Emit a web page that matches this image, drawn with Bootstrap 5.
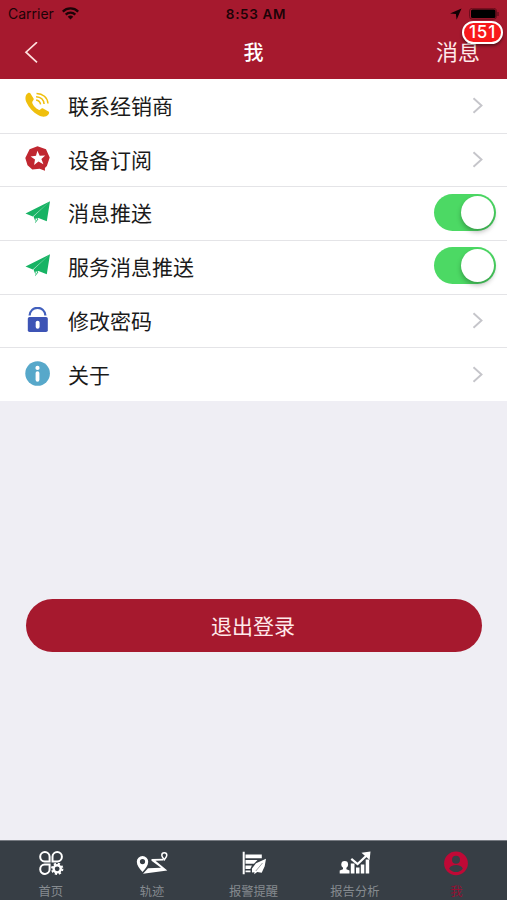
<!DOCTYPE html>
<html lang="zh-CN">
<head>
<meta charset="utf-8">
<meta name="viewport" content="width=device-width, initial-scale=1">
<title>我</title>
<link href="https://cdn.jsdelivr.net/npm/bootstrap@5.3.0/dist/css/bootstrap.min.css" rel="stylesheet">
<style>
body{font-family:Inter,"Noto Sans CJK SC",sans-serif;background:#efeef4;height:900px;overflow:hidden}
svg{display:block;flex:none}
.app-head{background:#a6192e;height:79px}
.status{height:27px;padding:0 8px;font-size:14px;line-height:28px;color:#1c0307}
.status-side{width:150px}
.clock{font-weight:600;font-size:13.5px;letter-spacing:.65px;padding-left:5px}
.title-bar{height:52px;padding:0 27px 0 24px;color:#fff}
.title-side{width:100px}
.title-text{font-size:20px;font-weight:500;line-height:52px;padding-left:3px}
.msg{font-size:22px;line-height:51px;color:#ffe9ea}
.count{top:-6px;right:-23px;height:23px;width:41px;border:2px solid #fff;background:#f8191c;font-size:17px;line-height:19px;font-weight:500;letter-spacing:.8px;box-shadow:0 2px 3px rgba(0,0,0,.45);padding:0}
.settings .list-group-item{height:53.67px;padding:0 23px 0 24px;border:0;background:#fff;color:#1a1a1a;font-size:21px;line-height:1}
.settings .list-group-item+.list-group-item{border-top:1px solid #e4e4e7}
.settings .icon-cell{width:27px;margin-right:17px;padding-bottom:2px}
.settings .toggle-row{padding-right:11px}
.settings .toggle-row .row-label{padding-bottom:1px}
.settings .row-label{padding-top:1px}
.toggle{width:62px;height:37px;background:#4cd964;padding:2px;margin-bottom:3px}
.knob{width:33px;height:33px;background:#fff;box-shadow:0 3px 5px rgba(0,0,0,.28)}
.logout{margin:198px 25px 0 26px;height:53px}
.logout .btn{background:#a6192e;color:#ffe9ea;font-size:21px;line-height:1;padding:3px 2px 0 0}
.tabs{height:60px;background:#373e45;border-top:1px solid #777b82}
.tabs .nav-link{padding:9px 0 0;color:#868b90;font-size:12.3px;line-height:18px}
.tabs .nav-link.active{color:#950f32}
.tabs .tab-name{margin-top:7px}
</style>
<script src="https://cdn.jsdelivr.net/npm/bootstrap@5.3.0/dist/js/bootstrap.bundle.min.js"></script>
</head>
<body class="d-flex flex-column">
<header class="app-head flex-shrink-0">
  <div class="status d-flex justify-content-between">
    <div class="status-side d-flex align-items-center">Carrier
      <svg class="ms-2" width="17" height="13" viewBox="0 0 17 13" fill="none" stroke="#1c0307" stroke-width="2.3"><path d="M.8 4.6a11 11 0 0 1 15.4 0M3.7 7.6a6.9 6.9 0 0 1 9.6 0"/><path d="M8.5 12.6 5.7 9.8a4 4 0 0 1 5.6 0z" fill="#1c0307" stroke="none"/></svg>
    </div>
    <div class="clock">8:53 AM</div>
    <div class="status-side d-flex justify-content-end align-items-center">
      <svg width="49" height="12" viewBox="0 0 49 12"><path d="M0 5.4 11.5.4 6.6 11.7 5.9 6z" fill="#120104"/><rect x="19.5" y=".3" width="27" height="10.9" rx="2.8" fill="none" stroke="#6b0c1b"/><rect x="21" y="1.5" width="24.5" height="8.5" rx="1.5"/><path d="M48 4v4" stroke="#4a0812"/></svg>
    </div>
  </div>
  <div class="title-bar d-flex justify-content-between">
    <div class="title-side d-flex align-items-center"><svg width="14" height="22" viewBox="0 0 14 22" fill="none" stroke="#ffe1df" stroke-width="1.7"><path d="M13 .2 2 10.2 13 20.4"/></svg></div>
    <div class="title-text">我</div>
    <div class="title-side msg text-end"><span class="position-relative d-inline-block">消息<span class="count badge rounded-pill position-absolute">151</span></span></div>
  </div>
</header>
<main class="flex-grow-1">
  <div class="list-group list-group-flush settings">
    <a class="list-group-item d-flex align-items-center" href="#"><span class="icon-cell"><svg width="26" height="26" viewBox="0 0 26 26"><path d="M6.3 1.2 9.7 6.8c.6 1-1.6 2.5-1.5 3.8.3 2.5 4.1 6.5 6.8 7.3 1.3.4 2.4-2.1 3.7-1.6l5.8 3.2c1 .6.7 2-.1 3-2.4 3-6.5 2.8-10.3.6C9.300 20.400 4.900 16 2.400 10.300.6 6 1.500 2.200 4.500.8c.7-.3 1.400-.2 1.800.4z" fill="#efbf0d"/><g fill="none" stroke="#efbf0d" stroke-width="1.5"><path d="M12.100 8.100c2.300.3 4 1.800 4.500 4.300M12.100 4.800c4.400.3 7.600 3 8 7.200M12.500 1.400c6.300.2 11 4.100 11.500 10.100"/></g></svg></span><span class="row-label">联系经销商</span><svg class="ms-auto" width="12" height="17" viewBox="0 0 12 17" fill="none" stroke="#c5c5ca" stroke-width="1.9"><path d="m1.500 1.300 8 7.200-8 7.200"/></svg></a>
    <a class="list-group-item d-flex align-items-center" href="#"><span class="icon-cell"><svg width="26" height="26" viewBox="0 0 26 26"><path d="m13.500.2 8.500 3.100 3.700 8.200-2.800 8.600-2 1.800.1 2.900-5.400-2-7.300.6-4.800-4.200-2.200-7.300 4.300-8.700z" fill="#c02730"/><path d="m13.400 4.800 2.300 4.900 5.500-.2-3.800 3.600 2 5.200-4.900-2.700-4.400 3.500.9-5.500-4.400-3.100 5.400-.8z" fill="#fff"/></svg></span><span class="row-label">设备订阅</span><svg class="ms-auto" width="12" height="17" viewBox="0 0 12 17" fill="none" stroke="#c5c5ca" stroke-width="1.9"><path d="m1.500 1.300 8 7.200-8 7.200"/></svg></a>
    <div class="list-group-item toggle-row d-flex align-items-center"><span class="icon-cell"><svg width="27" height="26" viewBox="0 0 27 26"><path d="M26 1.200 1.500 13.600l7.300 2.800z M26 1.200 9.500 16.600l2 5.100z M26 1.200 13.200 17.600l9.600 3.600z M11.800 18.300l2.600 1-3.300 3.900z" fill="#17b364"/></svg></span><span class="row-label">消息推送</span><span class="toggle rounded-pill ms-auto d-flex justify-content-end" role="switch" aria-checked="true"><span class="knob rounded-circle"></span></span></div>
    <div class="list-group-item toggle-row d-flex align-items-center"><span class="icon-cell"><svg width="27" height="26" viewBox="0 0 27 26"><path d="M26 1.200 1.500 13.600l7.300 2.800z M26 1.200 9.500 16.600l2 5.100z M26 1.200 13.200 17.600l9.600 3.600z M11.800 18.300l2.600 1-3.300 3.900z" fill="#17b364"/></svg></span><span class="row-label">服务消息推送</span><span class="toggle rounded-pill ms-auto d-flex justify-content-end" role="switch" aria-checked="true"><span class="knob rounded-circle"></span></span></div>
    <a class="list-group-item d-flex align-items-center" href="#"><span class="icon-cell"><svg width="26" height="26" viewBox="0 0 26 26"><path d="M5.600 8.500C6.500-1.700 20.500-1.700 21.400 8.500" fill="none" stroke="#4260bd" stroke-width="2.300"/><rect x="3.800" y="10" width="20" height="15" rx="1.700" fill="#3d54b5"/><rect x="11.700" y="13.700" width="3.900" height="8" rx="1.900" fill="#fff"/></svg></span><span class="row-label">修改密码</span><svg class="ms-auto" width="12" height="17" viewBox="0 0 12 17" fill="none" stroke="#c5c5ca" stroke-width="1.9"><path d="m1.500 1.300 8 7.200-8 7.200"/></svg></a>
    <a class="list-group-item d-flex align-items-center" href="#"><span class="icon-cell"><svg width="26" height="26" viewBox="0 0 26 26"><circle cx="13.600" cy="12.500" r="12.300" fill="#57a8ca"/><circle cx="13.500" cy="6.900" r="2.100" fill="#fff"/><path d="M13.500 12.100v6.700" stroke="#fff" stroke-width="3.800" stroke-linecap="round"/></svg></span><span class="row-label">关于</span><svg class="ms-auto" width="12" height="17" viewBox="0 0 12 17" fill="none" stroke="#c5c5ca" stroke-width="1.9"><path d="m1.500 1.300 8 7.200-8 7.200"/></svg></a>
  </div>
  <div class="logout d-grid"><button class="btn rounded-pill border-0" type="button">退出登录</button></div>
</main>
<nav class="tabs nav nav-fill flex-nowrap flex-shrink-0">
  <a class="nav-link w-100 d-flex flex-column align-items-center" href="#"><svg width="26" height="26" viewBox="0 0 26 26" fill="none" stroke="#fff" stroke-width="2"><path d="M11.600 11.500H6.700a4.700 4.700 0 1 1 4.900-4.800zM14.500 11.500V6.700a4.700 4.700 0 1 1 4.800 4.800zM11.600 14.500v4.500a4.700 4.700 0 1 1-4.900-4.500z"/><circle cx="19.200" cy="18.800" r="3.600" stroke-width="2.400"/><circle cx="19.200" cy="18.800" r="5.200" stroke-width="2" stroke-dasharray="2.200 1.884"/></svg><span class="tab-name">首页</span></a>
  <a class="nav-link w-100 d-flex flex-column align-items-center" href="#"><svg width="32" height="26" viewBox="0 0 32 26"><path d="M6.500 22C3.500 18.500.8 15.500.8 11.800a5.700 5.700 0 0 1 11.400 0c0 3.700-2.700 6.700-5.700 10.200zM6.500 9a2.600 2.600 0 1 0 0 5.200A2.600 2.600 0 0 0 6.500 9z" fill="#fff" fill-rule="evenodd"/><path d="M28.300 9.700c-1.500-2-2.500-3-2.500-4.500a2.500 2.500 0 0 1 5 0c0 1.500-1 2.500-2.500 4.500z" fill="none" stroke="#fff" stroke-width="1.500"/><path d="M27 8.800 15.500 9v1.700l9.500 7L12 18.300 7 23.700 31.300 20.500 19.500 10.800l8-.3z" fill="#fff"/></svg><span class="tab-name">轨迹</span></a>
  <a class="nav-link w-100 d-flex flex-column align-items-center" href="#"><svg width="26" height="26" viewBox="0 0 26 26"><path d="M1.700 1.700h2v22.600h-2zM4.500 4.500h16.300v3.700H4.500zM4.500 10h12l-3.500 3.700H4.500zM4.500 15.500h6.400l-1.600 3.400H4.500zM4.500 20.400h5v1.800h-5z" fill="#fff"/><path d="M25 8.700 15 13.200 11 18.500v4l2.500-.2-.3 2 3-2.200 4.500.7 3-6.500z" fill="#fff"/><path d="m21.500 13-6.700 8" stroke="#373e45" stroke-width=".5"/></svg><span class="tab-name">报警提醒</span></a>
  <a class="nav-link w-100 d-flex flex-column align-items-center" href="#"><svg width="32" height="26" viewBox="0 0 32 26" fill="#fff"><circle cx="5.700" cy="14.500" r="3.400"/><path d="M4 17h3.400v2.300l3.100 1.200v3H.7v-3L4 19.300zM11.800 13.500h3.700v10h-3.700zM17 17.500h3.500v6H17zM21.800 14.500h3.500v9h-3.500zM26.700 9.500h3.500v14h-3.500z"/><path d="m12.300 8.800 6.300 5.200 9-8.500" fill="none" stroke="#fff" stroke-width="2.200"/><path d="m22.500 2.700 9-1.200-.9 8.500z"/></svg><span class="tab-name">报告分析</span></a>
  <a class="nav-link active w-100 d-flex flex-column align-items-center" href="#"><svg width="26" height="26" viewBox="0 0 26 26"><circle cx="13" cy="13.300" r="11.900" fill="#bf0936"/><circle cx="13" cy="9.800" r="4" fill="#373e45"/><path d="M6.200 18.700c1.300-5 12.300-5 13.600 0-3.700 4.500-9.900 4.500-13.600 0z" fill="#373e45"/></svg><span class="tab-name">我</span></a>
</nav>
</body>
</html>
